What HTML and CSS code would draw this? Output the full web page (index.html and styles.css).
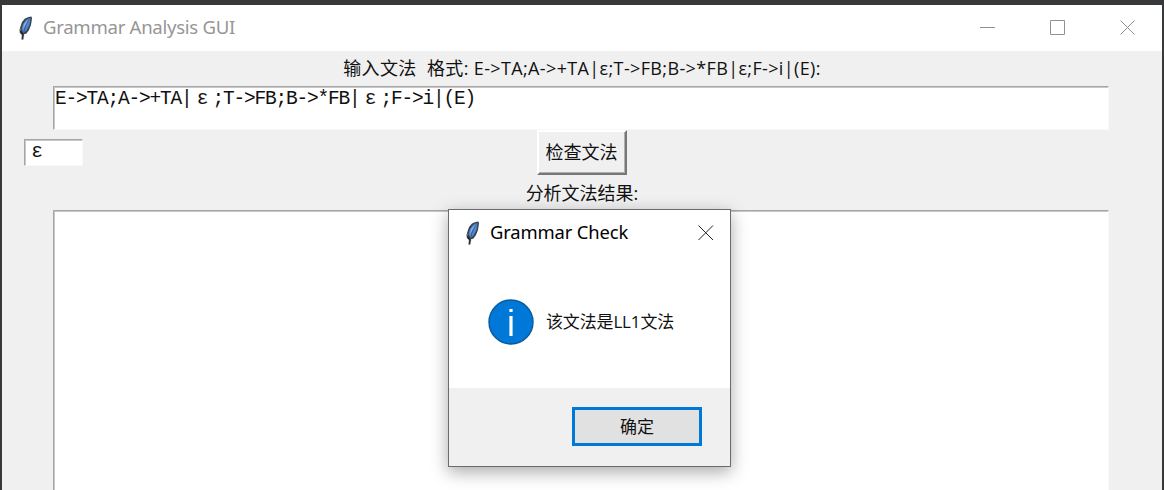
FILE: index.html
```html
<!DOCTYPE html>
<html lang="zh-CN">
<head>
<meta charset="utf-8">
<title>Grammar Analysis GUI</title>
<link rel="stylesheet" href="styles.css">
</head>
<body>
<svg class="defs" aria-hidden="true">
  <symbol id="feather" viewBox="0 0 16 26">
    <path d="M10.5 2 13.5 1.5 14 3.5 13 10 11 15 8.5 18.5 5.5 19.5 3 18 2 13 4 7 7 3.5Z" fill="#3a424c"/>
    <path d="M11 3 8 5 5 9 3.6 14 5.5 18 8.5 15.5 11.5 10 12.5 3Z" fill="#4c87cf"/>
    <path d="M10.5 4 6 9 5 14 8 10 11.5 4Z" fill="#85b3e8"/>
    <path d="M11.5 3 7.5 11 5 20" fill="none" stroke="#2f4e78" stroke-width=".8"/>
    <path d="M1.5 14 2 18 4 20 3.6 24.5 5.2 24.5 6 20" fill="#202326" stroke="#888" stroke-width=".4"/>
  </symbol>
</svg>
<main class="window">
  <header class="titlebar">
    <svg class="feather"><use href="#feather"/></svg>
    <span class="title">Grammar Analysis GUI</span>
    <div class="controls">
      <svg viewBox="0 0 16 16"><path d="M0 7.5H15"/></svg>
      <svg viewBox="0 0 16 16"><path d="M.5.5H14.5V14.5H.5Z"/></svg>
      <svg viewBox="0 0 16 16"><path d="M.5.5 14.5 14.5M14.5.5.5 14.5"/></svg>
    </div>
  </header>
  <div class="label hint"><span class="hint-cn">输入文法&nbsp; 格式:</span><span class="hint-rule">E-&gt;TA;A-&gt;+TA|ε;T-&gt;FB;B-&gt;*FB|ε;F-&gt;i|(E):</span></div>
  <div class="field grammar">E-&gt;TA;A-&gt;+TA|<span class="wide">ε</span>;T-&gt;FB;B-&gt;*FB|<span class="wide">ε</span>;F-&gt;i|(E)</div>
  <div class="row">
    <div class="field epsilon"><span class="wide">ε</span></div>
    <div class="check">检查文法</div>
  </div>
  <div class="label result-label">分析文法结果:</div>
  <div class="field result"></div>
</main>
<section class="dialog">
  <div class="dialog-title">
    <svg class="feather"><use href="#feather"/></svg>
    <span class="dialog-name">Grammar Check</span>
    <svg class="close" viewBox="0 0 16 16"><path d="M.5.5 15 15M15 .5.5 15"/></svg>
  </div>
  <div class="dialog-body">
    <svg class="info" viewBox="0 0 46 46"><circle cx="23" cy="23" r="22" fill="#0078d7" stroke="#085a9e" stroke-width="1.4"/><path d="M21.4 10H24.6V13H21.4ZM21.4 17H24.6V37H21.4Z" fill="#fff"/></svg>
    <span class="message">该文法是LL1文法</span>
  </div>
  <div class="dialog-footer"><div class="ok">确定</div></div>
</section>
</body>
</html>
```
FILE: styles.css
```css
* { box-sizing: border-box; }
body {
  margin: 0;
  width: 1164px;
  height: 490px;
  overflow: hidden;
  padding: 5px 2px 0;
  background: #38393b;
  color: #111;
  font-family: "Open Sans", "Noto Sans CJK SC", sans-serif;
}
.defs { position: absolute; width: 0; height: 0; }
.window { height: 485px; display: flex; flex-direction: column; background: #f0f0f0; overflow: hidden; }
.titlebar { height: 46px; flex: none; display: flex; align-items: center; background: #fff; padding: 0 26px 0 16px; }
.feather { width: 16px; height: 26px; flex: none; }
.title { margin: -2px 0 0 9px; color: #969696; font: 18.6px/24px "Noto Sans", sans-serif; letter-spacing: -.3px; white-space: nowrap; }
.controls { margin-left: auto; display: flex; gap: 54px; }
.controls svg { width: 16px; height: 16px; fill: none; stroke: #919191; }
.label { font-size: 18px; line-height: 35px; height: 35px; flex: none; text-align: center; white-space: nowrap; }
.hint { display: flex; justify-content: center; gap: 5px; }
.hint-cn { letter-spacing: .4px; }
.hint-rule { letter-spacing: .36px; }
.field {
  background: #fff;
  border: 1px solid #f8f8f8;
  border-top-color: #a6a6a6;
  border-left-color: #a6a6a6;
  box-shadow: inset 1px 1px #c8c8c8;
  padding: 1px;
  font: 19.5px/22px "Liberation Mono", monospace;
  letter-spacing: -1.2px;
  white-space: pre;
}
.grammar { margin: 0 53px 0 51px; height: 44px; flex: none; }
.wide { display: inline-block; width: 21px; text-align: center; }
.row { height: 45px; flex: none; display: flex; }
.epsilon { width: 59px; height: 27px; margin: 9px 0 0 22px; }
.check {
  width: 90px; height: 45px; margin-left: 454px;
  border: 2px solid; border-color: #fff #777 #777 #fff;
  box-shadow: inset -1px -1px #b0b0b0;
  font-size: 18px; line-height: 41px; text-align: center; text-indent: -1px;
}
.result-label { line-height: 36px; }
.result { margin: 0 53px 0 51px; flex: 1; border-bottom: 0; }
.dialog {
  position: absolute; left: 448px; top: 209px; width: 283px; height: 258px;
  border: 1px solid #6b6b6b; background: #fff;
  box-shadow: 0 5px 16px rgba(0, 0, 0, .34);
  display: flex; flex-direction: column;
}
.dialog-title { height: 45px; display: flex; align-items: center; padding: 0 16px 0 16px; }
.dialog-name { margin: -2px 0 0 9px; color: #000; font: 18.4px/24px "Noto Sans", sans-serif; letter-spacing: -.15px; white-space: nowrap; }
.close { margin-left: auto; width: 16px; height: 16px; fill: none; stroke: #222; }
.dialog-body { height: 133px; display: flex; align-items: center; padding-left: 39px; }
.info { width: 46px; height: 46px; flex: none; }
.message { margin: -2px 0 0 12px; font-size: 17px; letter-spacing: -.15px; white-space: nowrap; }
.dialog-footer { flex: 1; background: #f0f0f0; padding: 19px 28px 0 0; display: flex; justify-content: flex-end; }
.ok { width: 130px; height: 39px; border: 3px solid #0078d7; background: #e1e1e1; font-size: 17px; line-height: 34px; text-align: center; }
```
